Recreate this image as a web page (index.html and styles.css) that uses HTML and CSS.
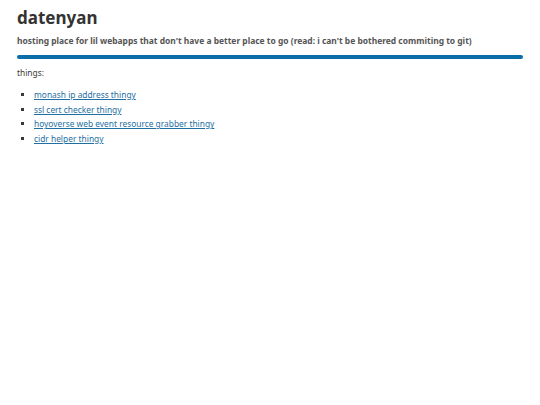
FILE: index.html
```html
<!DOCTYPE html>
<html>
<head>
<meta charset="utf-8">
<link rel="stylesheet" href="styles.css">
</head>
<body>
<header class="head">
  <h1 class="title">datenyan</h1>
  <p class="sub">hosting place for lil webapps that don't have a better place to go (read: i can't be bothered commiting to git)</p>
  <div class="bar"></div>
</header>
<main>
  <p class="intro">things:</p>
  <ul class="list">
    <li><a href="#">monash ip address thingy</a></li>
    <li><a href="#">ssl cert checker thingy</a></li>
    <li><a href="#">hoyoverse web event resource grabber thingy</a></li>
    <li><a href="#">cidr helper thingy</a></li>
  </ul>
</main>
</body>
</html>
```
FILE: styles.css
```css
body {
  margin: 0;
  padding: 7px 17px;
  font-family: "Noto Sans", "Open Sans", sans-serif;
  color: #3a3a3a;
  font-size: 8.4px;
  line-height: 12px;
  background: #fff;
}
.title {
  margin: 0;
  font-size: 17px;
  line-height: 22px;
  font-weight: 700;
  color: #333;
}
.sub {
  margin: 6px 0 8px;
  font-size: 8.45px;
  font-weight: 700;
  color: #555;
}
.bar {
  height: 4px;
  border-radius: 2px;
  background: #0a6ea8;
}
.intro {
  margin: 8px 0 10px;
}
.list {
  margin: 0;
  padding-left: 17px;
  list-style: square;
}
.list li {
  margin-bottom: 2.7px;
}
.list a {
  color: #1f6fa3;
}
```
